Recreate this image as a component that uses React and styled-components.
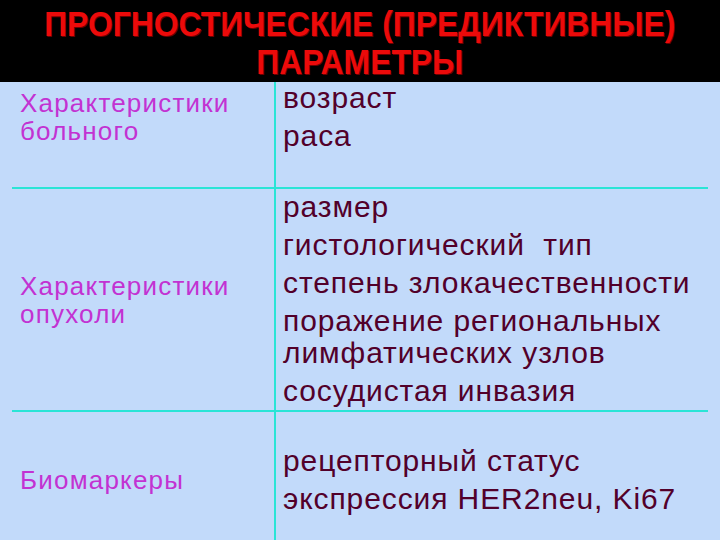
import React from 'react';
import styled, { createGlobalStyle } from 'styled-components';

const Global = createGlobalStyle`
  html, body {
    margin: 0;
    padding: 0;
    background: #c2dafa;
  }
  body {
    width: 720px;
    height: 540px;
    overflow: hidden;
  }
`;

const rows = [
  {
    label: ['Характеристики', 'больного'],
    items: ['возраст', 'раса'],
    labelAlign: 'flex-start',
    labelPad: 7,
    valueAlign: 'flex-start',
    valuePad: 0,
    height: 107,
  },
  {
    label: ['Характеристики', 'опухоли'],
    items: [
      'размер',
      'гистологический  тип',
      'степень злокачественности',
      'поражение региональных лимфатических узлов',
      'сосудистая инвазия',
    ],
    labelAlign: 'center',
    labelPad: 0,
    valueAlign: 'flex-start',
    valuePad: 2,
    height: 223,
  },
  {
    label: ['Биомаркеры'],
    items: ['рецепторный статус', 'экспрессия HER2neu, Ki67'],
    labelAlign: 'center',
    labelPad: 8,
    valueAlign: 'center',
    valuePad: 8,
    height: 128,
  },
];

const Slide = () => (
  <Page>
    <Global />
    <Header>
      <Title>
        ПРОГНОСТИЧЕСКИЕ (ПРЕДИКТИВНЫЕ)
        <br />
        ПАРАМЕТРЫ
      </Title>
    </Header>
    <Table>
      {rows.map((row, i) => (
        <Row key={i} $height={row.height} $last={i === rows.length - 1}>
          <LabelCell $align={row.labelAlign} $pad={row.labelPad}>
            {row.label.map((l) => (
              <span key={l}>{l}</span>
            ))}
          </LabelCell>
          <ValueCell $align={row.valueAlign} $pad={row.valuePad}>
            {row.items.map((it) => (
              <Item key={it}>{it}</Item>
            ))}
          </ValueCell>
        </Row>
      ))}
    </Table>
  </Page>
);

const Page = styled.main`
  width: 720px;
  height: 540px;
  display: flex;
  flex-direction: column;
  background: #c2dafa;
`;

const Header = styled.header`
  height: 82px;
  flex-shrink: 0;
  background: #000;
  display: flex;
  align-items: center;
  justify-content: center;
  padding-top: 4px;
  box-sizing: border-box;
`;

const Title = styled.h1`
  margin: 0;
  font-family: 'Liberation Sans', Arial, sans-serif;
  font-weight: bold;
  font-size: 35px;
  line-height: 38px;
  text-align: center;
  white-space: nowrap;
  color: #ec0a0a;
  text-shadow: 1px 1px 0 #6a0000;
  transform: scaleX(0.91);
`;

const Table = styled.section`
  flex: 1;
  display: flex;
  flex-direction: column;
  padding: 0 12px;
`;

const Row = styled.div`
  height: ${(p) => p.$height}px;
  flex-shrink: 0;
  display: grid;
  grid-template-columns: 264px 1fr;
  border-bottom: ${(p) => (p.$last ? 'none' : '2px solid #2ae4d6')};
  box-sizing: border-box;
`;

const LabelCell = styled.div`
  display: flex;
  flex-direction: column;
  justify-content: ${(p) => p.$align};
  padding: ${(p) => p.$pad}px 0 0 8px;
  border-right: 2px solid #2ae4d6;
  font-family: 'Liberation Sans', Arial, sans-serif;
  font-size: 26px;
  line-height: 28px;
  letter-spacing: 1.2px;
  color: #c232d2;
`;

const ValueCell = styled.div`
  display: flex;
  flex-direction: column;
  justify-content: ${(p) => p.$align};
  gap: 6px;
  padding: ${(p) => p.$pad}px 0 0 7px;
  font-family: 'Liberation Sans', Arial, sans-serif;
  font-size: 30px;
  line-height: 32px;
  letter-spacing: 0.9px;
  color: #52002a;
`;

const Item = styled.div`
  white-space: pre-wrap;
  max-width: 420px;
`;

export default Slide;
